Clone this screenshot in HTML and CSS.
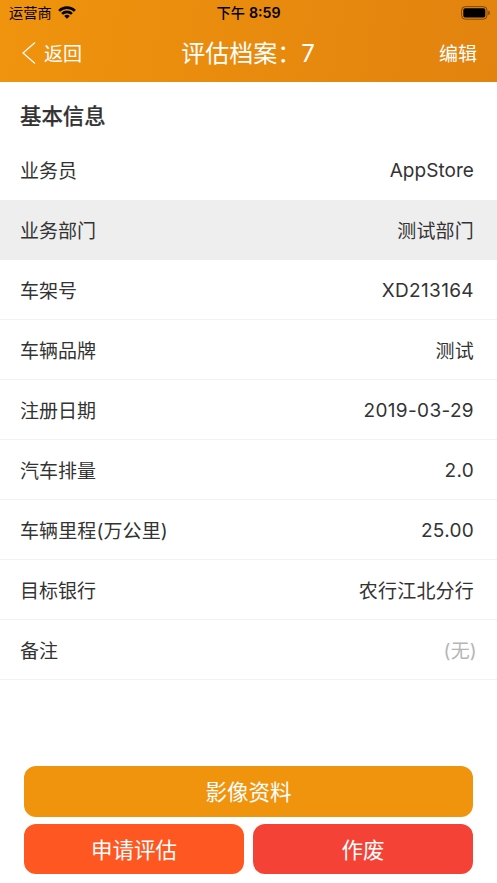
FILE: index.html
```html
<!DOCTYPE html>
<html lang="zh-CN">
<head>
<meta charset="utf-8">
<title>评估档案</title>
<link rel="stylesheet" href="styles.css">
</head>
<body>
<header class="header">
  <div class="status">
    <div class="carrier"><span>运营商</span>
      <svg class="wifi" width="18" height="13" viewBox="0 0 18 13"><path d="M9 12.8 6.2 10a4 4 0 0 1 5.6 0zM5 8.8 3.2 7a8.2 8.2 0 0 1 11.6 0L13 8.8a5.7 5.7 0 0 0-8 0zM2 5.8.2 4a12.4 12.4 0 0 1 17.6 0L16 5.8a9.9 9.9 0 0 0-14 0z"/></svg>
    </div>
    <div class="time"><span class="period">下午</span><span>8:59</span></div>
    <svg class="battery" width="29" height="14" viewBox="0 0 29 14"><rect x=".6" y=".6" width="25.4" height="12.6" rx="3.8" fill="none" stroke="#000" stroke-opacity=".45"/><rect x="2.3" y="2.3" width="22" height="9.2" rx="1.8"/><path d="M27.3 4.6q1.6.8 1.6 2.3t-1.6 2.3z" opacity=".5"/></svg>
  </div>
  <nav class="nav">
    <a class="back"><svg class="chevron" width="14" height="24" viewBox="0 0 14 24"><path d="M13 1.5 1 12 13 22.5" fill="none" stroke="#fff" stroke-width="1.2"/></svg><span class="label">返回</span></a>
    <h1 class="title">评估档案：7</h1>
    <a class="edit label">编辑</a>
  </nav>
</header>
<main>
  <h2 class="section">基本信息</h2>
  <div class="row first"><span>业务员</span><span class="value latin">AppStore</span></div>
  <div class="row selected"><span>业务部门</span><span class="value">测试部门</span></div>
  <div class="row"><span>车架号</span><span class="value latin code">XD213164</span></div>
  <div class="row"><span>车辆品牌</span><span class="value">测试</span></div>
  <div class="row"><span>注册日期</span><span class="value latin code">2019-03-29</span></div>
  <div class="row"><span>汽车排量</span><span class="value latin number">2.0</span></div>
  <div class="row"><span class="wide">车辆里程(万公里)</span><span class="value latin number">25.00</span></div>
  <div class="row"><span>目标银行</span><span class="value">农行江北分行</span></div>
  <div class="row"><span>备注</span><span class="value empty">(无)</span></div>
</main>
<footer class="actions">
  <button class="btn media">影像资料</button>
  <button class="btn apply">申请评估</button>
  <button class="btn void">作废</button>
</footer>
</body>
</html>
```
FILE: styles.css
```css
* { box-sizing: border-box; }
body { margin: 0; height: 883px; display: flex; flex-direction: column; background: #fff; color: #333; font-family: Inter, "Noto Sans CJK SC", sans-serif; font-size: 19px; overflow: hidden; }
.header { height: 82px; background: linear-gradient(100deg, #f0930d, #e1830e); color: #fff; }
.status { height: 26px; display: grid; grid-template-columns: 1fr auto 1fr; align-items: center; padding: 0 7px 0 9px; color: #000; font-size: 14.2px; line-height: 26px; }
.carrier { display: flex; align-items: center; gap: 6px; }
.wifi { margin-bottom: 2px; }
.time { display: flex; gap: 4px; padding-right: 2px; font-weight: 600; }
.period { font-weight: 500; }
.battery { justify-self: end; margin-bottom: 1px; }
.nav { height: 56px; display: grid; grid-template-columns: 1fr auto 1fr; align-items: center; padding: 0 20px 0 22px; }
.back { display: flex; align-items: center; gap: 8px; }
.chevron { margin-bottom: 2px; }
.label { padding-bottom: 3px; }
.title { margin: 0; padding-right: 3px; font-size: 24px; font-weight: 400; line-height: 36px; }
.edit { justify-self: end; }
.section { margin: 0; height: 58px; padding: 6px 20px 0; font-size: 21.4px; line-height: 56px; font-weight: 500; -webkit-text-stroke: .2px #333; }
.row { height: 60px; display: flex; justify-content: space-between; align-items: center; padding: 0 23px 0 20px; border-bottom: 1px solid #f2f2f2; white-space: nowrap; }
.first { border-color: transparent; }
.selected { background: #eee; border-color: #eee; }
.wide { letter-spacing: .1px; }
.value { letter-spacing: .2px; }
.latin { padding-top: 2px; letter-spacing: .05px; }
.code { letter-spacing: .35px; }
.number { letter-spacing: .3px; }
.empty { color: #b5b5b5; margin-right: -3px; }
.actions { margin-top: auto; padding: 0 24px 8.7px; display: grid; grid-template-columns: 1fr 1fr; gap: 7.3px 9px; }
.btn { height: 50.3px; padding: 0 0 2px; border: 0; border-radius: 12px; color: #fff; font: inherit; font-size: 21.5px; }
.media { grid-column: span 2; background: #f0930d; }
.apply { background: #ff5722; }
.void { background: #f44336; }
```
